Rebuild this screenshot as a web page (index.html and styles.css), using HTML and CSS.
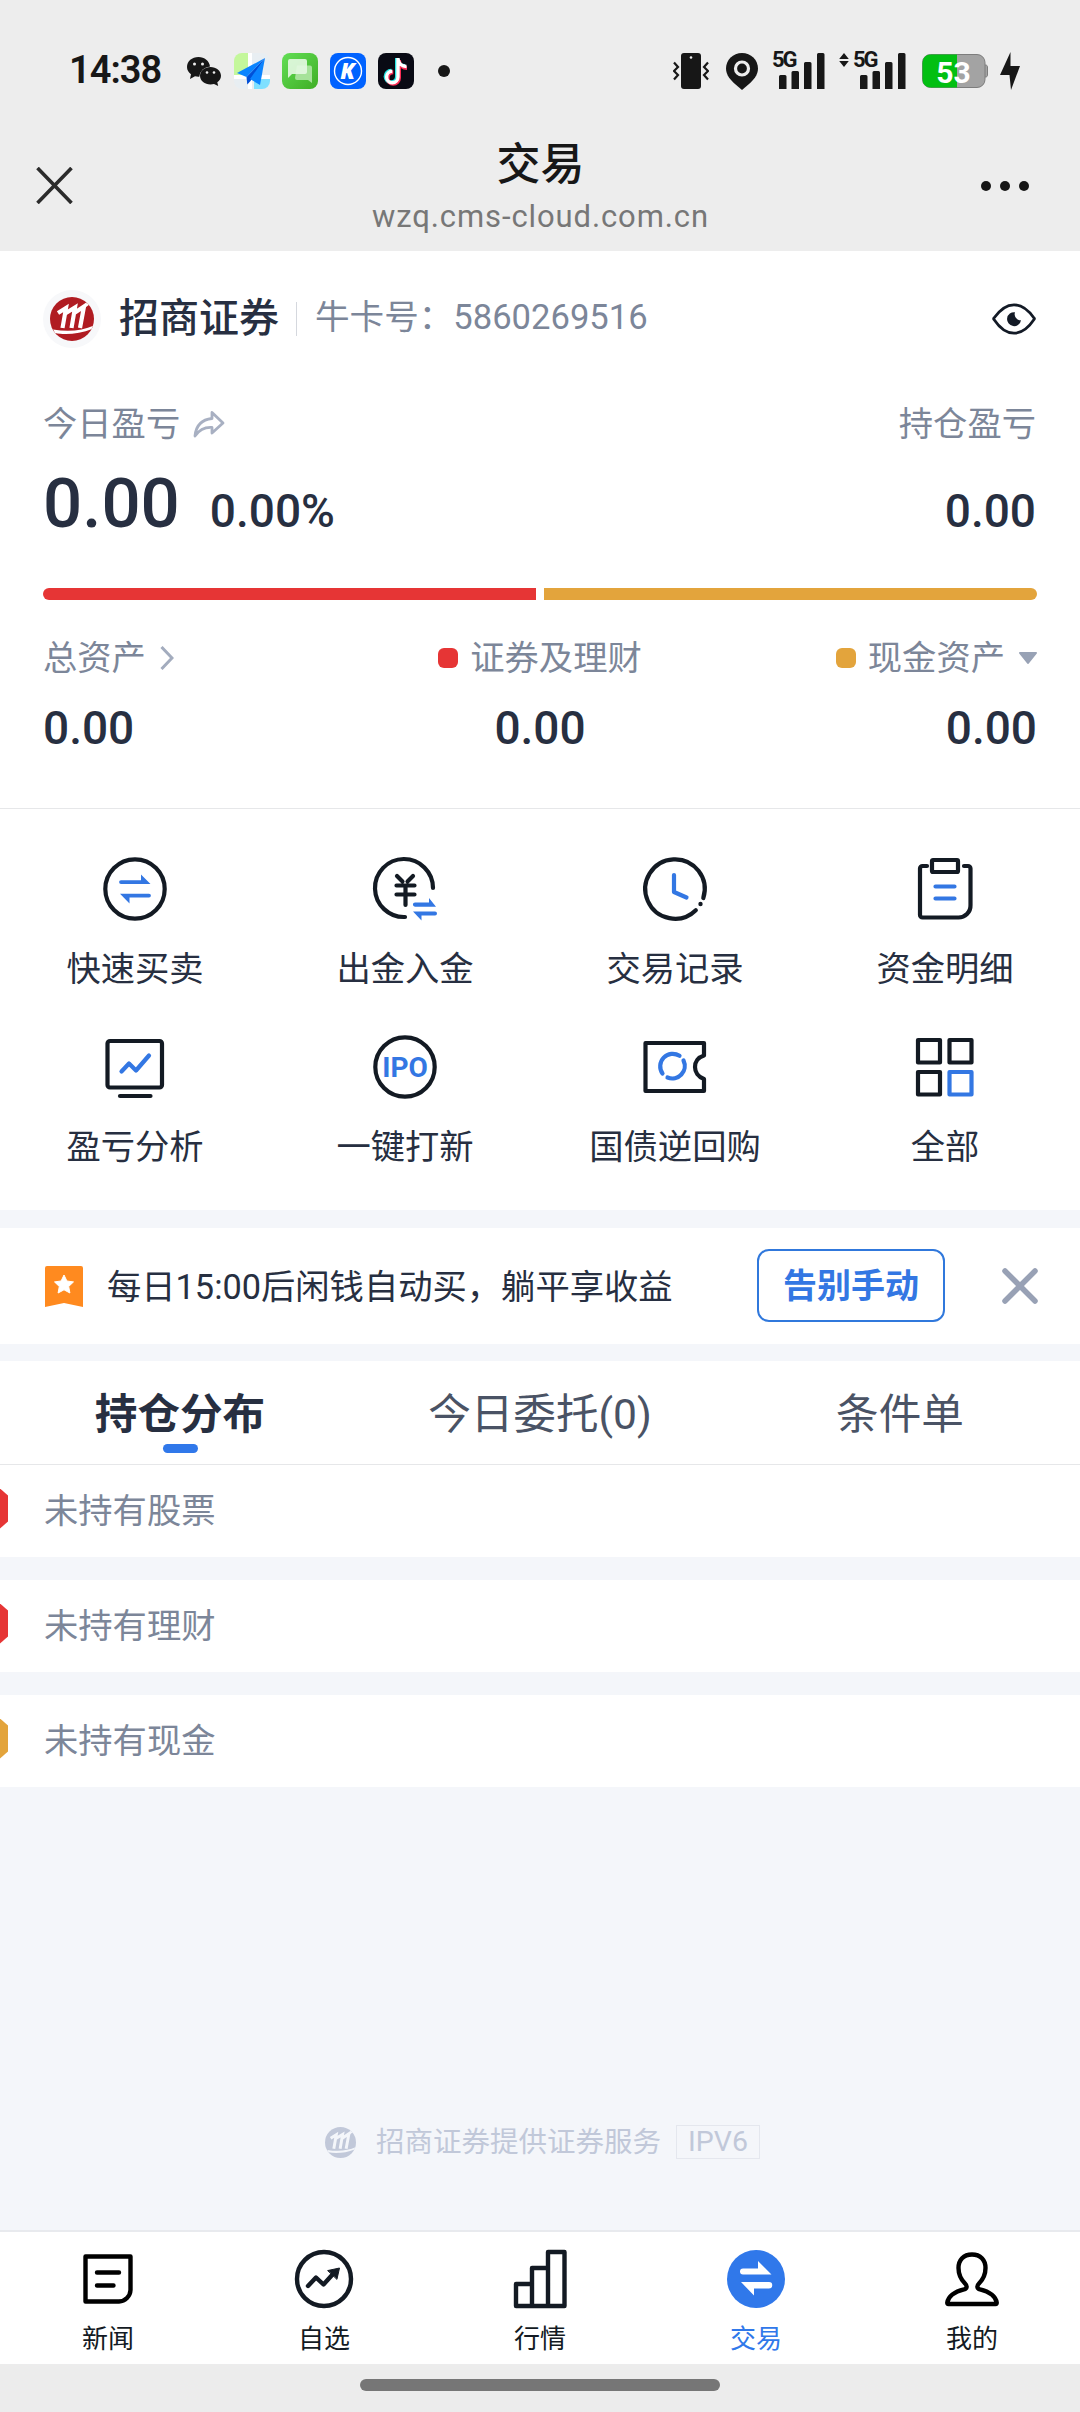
FILE: index.html
```html
<!DOCTYPE html>
<html lang="zh-CN">
<head>
<meta charset="utf-8">
<title>交易</title>
<link rel="stylesheet" href="styles.css">
</head>
<body>
<svg class="defs" width="0" height="0">
  <defs>
    <symbol id="brand" viewBox="0 0 44 44">
      <clipPath id="disc"><circle cx="22" cy="22" r="22"/></clipPath>
      <g clip-path="url(#disc)">
        <rect width="44" height="44" fill="currentColor"/>
        <path d="M8 16L16 11L12.500 31M16 16L25 10.500L21.500 31M25 15.500L34 9.500L30 31" fill="none" stroke="var(--cut)" stroke-width="4.200"/>
        <path d="M3 32.500C18 35 32 34 44 28.500L42 32C30 37 15 38 5 36Z" fill="var(--cut)"/>
        <path d="M34 10L42 4" stroke="var(--cut)" stroke-width="2.500"/>
      </g>
    </symbol>
    <symbol id="signal" viewBox="0 0 46 36">
      <path d="M1.500 22h4.500a1.500 1.500 0 0 1 1.500 1.500V36H0V23.500A1.500 1.500 0 0 1 1.500 22ZM14 18h4.500a1.500 1.500 0 0 1 1.500 1.500V36h-7.500V19.500A1.500 1.500 0 0 1 14 18ZM26.500 9H31a1.500 1.500 0 0 1 1.500 1.500V36H25V10.500A1.500 1.500 0 0 1 26.500 9ZM39.500 0H44a1.500 1.500 0 0 1 1.500 1.500V36H38V1.500A1.500 1.500 0 0 1 39.500 0Z" fill="#171717"/>
    </symbol>
  </defs>
</svg>

<header class="top">
  <div class="status">
    <span class="clock">14:38</span>
    <div class="apps">
      <svg width="36" height="36" viewBox="0 0 36 36">
        <path d="M12.500 4C6 4 1 8.300 1 14c0 3 1.500 5.500 4 7.300L4 26l5-2.700c1.100.3 2.300.5 3.500.5l.8 0A11.300 11.300 0 0 1 24 13.400C23.500 8 18.500 4 12.500 4Z" fill="#171717"/>
        <path d="M24.500 14C18.800 14 14 17.800 14 22.800s4.800 8.700 10.500 8.700c1.200 0 2.400-.2 3.500-.5l4.200 2-.9-3.700c2.200-1.600 3.700-3.900 3.700-6.500 0-5-4.800-8.800-10.500-8.800Z" fill="#171717"/>
        <g fill="#ededed"><circle cx="8.500" cy="11" r="1.500"/><circle cx="16.500" cy="11" r="1.500"/><circle cx="21" cy="19.500" r="1.300"/><circle cx="28" cy="19.500" r="1.300"/></g>
      </svg>
      <svg width="36" height="36" viewBox="0 0 36 36">
        <clipPath id="app"><rect width="36" height="36" rx="8"/></clipPath>
        <g clip-path="url(#app)">
          <rect width="36" height="36" fill="#e8eef2"/>
          <rect width="14" height="22" fill="#c4f79b"/>
          <path d="M36 26H20v10h16Z" fill="#7fe0ff"/>
          <path d="M14 0h4v36h-4ZM0 22h18v4H0ZM18 22l18 0v4H18Z" fill="#fff"/>
        </g>
        <path d="M31 5L3 20l9.500 4Z" fill="#0a84ff"/><path d="M31 5L12.500 24l.8 7.500L16.500 28Z" fill="#0050d8"/><path d="M31 5L16 26l10 6Z" fill="#0a84ff"/>
      </svg>
      <svg width="36" height="36" viewBox="0 0 36 36">
        <defs><linearGradient id="green" x2="1" y2="1"><stop stop-color="#62de55"/><stop offset="1" stop-color="#3fae25"/></linearGradient></defs>
        <rect width="36" height="36" rx="8" fill="url(#green)"/>
        <path d="M15 12.500h13a2 2 0 0 1 2 2V30l-4-3H15a2 2 0 0 1-2-2Z" fill="#a6e29a"/>
        <path d="M8 6h15a2 2 0 0 1 2 2v11a2 2 0 0 1-2 2H10l-4 4V8a2 2 0 0 1 2-2Z" fill="#e6f8e3" fill-opacity=".9"/>
      </svg>
      <svg width="36" height="36" viewBox="0 0 36 36">
        <rect width="36" height="36" rx="8" fill="#0062ff"/><circle cx="18" cy="18" r="13.500" fill="none" stroke="#fff" stroke-width="1.400"/>
        <text x="17.500" y="26" class="app-k" text-anchor="middle">K</text>
      </svg>
      <svg width="36" height="36" viewBox="0 0 36 36">
        <rect width="36" height="36" rx="8" fill="#090a14"/>
        <g fill="none" stroke-width="4">
          <path d="M19 5v18.500a5.700 5.700 0 1 1-5.700-5.700M19 6c.5 4.500 4 7 8 7" stroke="#27e5e4"/>
          <path d="M21 7v18a5.700 5.700 0 1 1-5.700-5.700M21 8c.5 4.500 4 7 8 7" stroke="#fb2c55"/>
          <path d="M20 5v19a5.700 5.700 0 1 1-5.700-5.700M20 6c.5 4.500 4 7.500 8.500 7.500" stroke="#fff" stroke-width="3.400"/>
        </g>
      </svg>
      <i class="more-dot"></i>
    </div>
    <div class="system">
      <svg class="vibrate" width="36" height="36" viewBox="0 0 36 36">
        <rect x="8" width="20" height="36" rx="3" fill="#171717"/><circle cx="18" cy="4.500" r="1.300" fill="#ededed"/>
        <path d="M1 9.500l4 4.500-4 4 4 4-4 4.500M35 9.500L31 14l4 4-4 4 4 4.500" fill="none" stroke="#171717" stroke-width="2.200"/>
      </svg>
      <svg class="pin" width="32" height="37" viewBox="0 0 32 37">
        <path d="M16 0C7 0 0 7 0 15.500 0 22 4.500 27 9 31l7 6 7-6c4.500-4 9-9 9-15.500C32 7 25 0 16 0Z" fill="#171717"/><circle cx="16" cy="15.500" r="6.500" fill="none" stroke="#ededed" stroke-width="3.200"/>
      </svg>
      <div class="net net-a"><span>5G</span><svg width="46" height="36"><use href="#signal"/></svg></div>
      <svg class="updown" width="10" height="14" viewBox="0 0 10 14"><path d="M5 0l4.800 6H.2ZM5 14L.2 8h9.600Z" fill="#171717"/></svg>
      <div class="net"><span>5G</span><svg width="46" height="36"><use href="#signal"/></svg></div>
      <svg class="battery" width="66" height="34" viewBox="0 0 66 34">
        <path d="M62 11h1.500c1.500 0 2 1 2 2v8c0 1-.5 2-2 2H62Z" fill="#a3a3a3" stroke="#7d7d7d"/>
        <rect x=".5" y=".5" width="62.500" height="33" rx="8" fill="#a3a3a3" stroke="#7d7d7d"/>
        <path d="M35 .5H8.500a8 8 0 0 0-8 8v17a8 8 0 0 0 8 8H35Z" fill="#02bf12"/>
        <text x="31.500" y="28.500" text-anchor="middle" class="battery-text">53</text>
      </svg>
      <svg class="bolt" width="20" height="38" viewBox="0 0 20 38"><path d="M10.500 0L0 23h9.500L11 38 20 14h-9.500Z" fill="#171717"/></svg>
    </div>
  </div>
  <div class="nav">
    <svg width="37" height="37" viewBox="0 0 37 37"><path d="M1.500 1L35.500 36M35.500 1L1.500 36" stroke="#2b2b2b" stroke-width="3.600"/></svg>
    <div class="nav-title"><h1>交易</h1><p>wzq.cms-cloud.com.cn</p></div>
    <svg width="48" height="10" viewBox="0 0 48 10" fill="#171717"><circle cx="5" cy="5" r="5"/><circle cx="24" cy="5" r="5"/><circle cx="43" cy="5" r="5"/></svg>
  </div>
</header>

<section class="account">
  <div class="row broker">
    <span class="avatar"><svg width="44" height="44"><use href="#brand"/></svg></span>
    <b>招商证券</b><i class="vline"></i><span class="card-no">牛卡号：5860269516</span>
    <svg class="eye" width="44" height="32" viewBox="0 0 44 32">
      <path d="M2 16.500C1.500 16 1.500 15.500 2 15 8 6.500 14 1.800 22 1.800S36 6.500 42 15c.5.500.5 1 0 1.500C36 25.500 30 30.200 22 30.200S8 25.500 2 16.500Z" fill="none" stroke="#131a26" stroke-width="2.800"/>
      <path d="M23 9.200A7 7 0 1 0 29 17.200 6 6 0 0 1 23 9.200Z" fill="#131a26"/>
    </svg>
  </div>
  <div class="row labels">
    <span>今日盈亏</span>
    <svg class="share" width="32" height="28" viewBox="0 0 32 28"><path d="M19 2.500L30 13 19 23V17.500C12 17 6.500 19.500 2 26 3 16 8.500 9.500 19 8.500Z" fill="none" stroke="#a8b0c2" stroke-width="2.800" stroke-linejoin="round"/></svg>
    <span class="end">持仓盈亏</span>
  </div>
  <div class="row profit"><b class="big">0.00</b><b>0.00%</b><b class="end">0.00</b></div>
  <div class="ratio"><i class="stock"></i><i class="cash"></i></div>
  <div class="assets">
    <div><p>总资产<svg class="chev" width="14" height="24" viewBox="0 0 14 24"><path d="M1.500 1L12 12 1.500 23" fill="none" stroke="#a3acbe" stroke-width="3"/></svg></p><b>0.00</b></div>
    <div><p><i class="key stock"></i>证券及理财</p><b>0.00</b></div>
    <div><p><i class="key cash"></i>现金资产<svg class="tri" width="18" height="12" viewBox="0 0 18 12"><path d="M1 0h16a1 1 0 0 1 .8 1.500L9.800 11.500a1 1 0 0 1-1.600 0L.2 1.500A1 1 0 0 1 1 0Z" fill="#98a2b5"/></svg></p><b>0.00</b></div>
  </div>
</section>

<section class="grid">
  <a><svg viewBox="0 0 64 64"><circle cx="32" cy="32" r="29.700"/><g class="blue-fill"><path d="M18 23.200h20V17.500L47.500 27H18a1.900 1.900 0 0 1 0-3.800ZM46 40.500H26.500V46.500L17 36.700H46a1.900 1.900 0 0 1 0 3.800Z"/></g></svg>快速买卖</a>
  <a><svg viewBox="0 0 64 64"><path d="M60 31A29 29 0 1 0 32 60"/><path d="M24 19l5.500 5.500M40 19l-5.500 5.500M23.500 28.500h18M23.500 37.500h18M32.500 28.500V48"/><g class="blue-fill"><path d="M42 45.500h14V41L63 49.700H42a2.100 2.100 0 0 1 0-4.200ZM62 58.500H48.500V63.500L40 54.500H62a2 2 0 0 1 0 4Z"/></g></svg>出金入金</a>
  <a><svg viewBox="0 0 64 64"><path d="M60.300 41A29.700 29.700 0 1 0 52.800 53.200"/><circle cx="57.500" cy="47" r="2.200" fill="#131a23" stroke="none"/><path class="blue" d="M31 18v17l12.500 5.500"/></svg>交易记录</a>
  <a><svg viewBox="0 0 64 64"><path d="M14 9H9.500A2.500 2.500 0 0 0 7 11.500V58a2.500 2.500 0 0 0 2.500 2.500H45A12 12 0 0 0 57.500 48V11.500A2.500 2.500 0 0 0 55 9H51"/><rect x="19" y="3" width="26" height="12" rx="1"/><path class="blue" d="M22.500 29.500H41.500M22.500 41.500H41.500"/></svg>资金明细</a>
  <a><svg viewBox="0 0 64 64"><rect x="4.500" y="6" width="54.500" height="46.500" rx="2.500"/><path d="M17 61H47.500"/><path class="blue" d="M18.500 36.500L26 28.500L33 35.500L46 20.500"/></svg>盈亏分析</a>
  <a><svg viewBox="0 0 64 64"><circle cx="32" cy="32" r="29.700"/><text x="32" y="42" text-anchor="middle" class="ipo">IPO</text></svg>一键打新</a>
  <a><svg viewBox="0 0 64 64"><path d="M2.500 8H61V20.500C49 24 49 40 61 44V56H2.500Z"/><path class="blue" d="M36.500 20.800A12.500 12.500 0 0 0 19.500 38.500M24.500 42.500A12.500 12.500 0 0 0 40.500 25.500"/></svg>国债逆回购</a>
  <a><svg viewBox="0 0 64 64"><rect x="5" y="5" width="22" height="22.500"/><rect x="36.500" y="5" width="22" height="22.500"/><rect x="5" y="37" width="22" height="22.500"/><rect class="blue" x="36.500" y="37" width="22" height="22.500"/></svg>全部</a>
</section>

<section class="promo">
  <svg width="38" height="41" viewBox="0 0 38 41"><path d="M2 0H36a2 2 0 0 1 2 2V41L19 37 0 41V2A2 2 0 0 1 2 0Z" fill="#ff8a1f"/><path d="M19 9l2.900 6 6.600.9-4.800 4.600 1.200 6.500L19 23.800 13.100 27l1.200-6.500-4.800-4.600 6.600-.9Z" fill="#fff" stroke="#fff" stroke-linejoin="round"/></svg>
  <p>每日15:00后闲钱自动买，躺平享收益</p>
  <button>告别手动</button>
  <svg class="dismiss" width="36" height="36" viewBox="0 0 36 36"><path d="M3 3L33 33M33 3L3 33" stroke="#98a1b5" stroke-width="5.500" stroke-linecap="round"/></svg>
</section>

<nav class="tabs"><a class="active">持仓分布</a><a>今日委托(0)</a><a>条件单</a></nav>
<ul class="holdings">
  <li><i class="stock"></i>未持有股票</li>
  <li><i class="stock"></i>未持有理财</li>
  <li><i class="cash"></i>未持有现金</li>
</ul>

<footer class="service"><svg width="31" height="31"><use href="#brand"/></svg><span>招商证券提供证券服务</span><em>IPV6</em></footer>

<nav class="tabbar">
  <a><svg viewBox="0 0 60 60"><path d="M7.500 7.500H52.500V41A12 12 0 0 1 41 52.500H7.500Z" stroke="#000"/><path d="M19 23.500H41M19 36.500H35.500" stroke="#000"/></svg>新闻</a>
  <a><svg viewBox="0 0 60 60"><circle cx="30" cy="30" r="27"/><path d="M14 37L22 28.500L29.500 35.500L39 25"/><path d="M34 21.500L45.500 19 43 30Z" fill="#131a23" stroke-width="1"/></svg>自选</a>
  <a><svg viewBox="0 0 60 60"><path d="M6 35H22V57H6ZM22 19H38V57H22ZM38 3H54.500V57H38Z"/></svg>行情</a>
  <a class="active"><svg viewBox="0 0 60 60"><circle cx="30" cy="30" r="29" fill="#3078ea" stroke="none"/><path d="M17 19.500H32V12L45.500 25.500H17A3 3 0 0 1 17 19.500ZM43 39.500H28V46.500L15 33H43A3.200 3.200 0 0 1 43 39.500Z" fill="#fff" stroke="none"/></svg>交易</a>
  <a><svg viewBox="0 0 60 60"><path d="M30 5.500C21.500 5.500 16.500 11 16.500 19C16.500 26 19 30.500 23 34.500C25.500 37 25 39.500 22 40.300C12 42.500 6 48 5.300 53.500C5.200 54.500 5.500 55 6.500 55H53.500C54.500 55 54.800 54.500 54.700 53.500C54 48 48 42.500 38 40.300C35 39.500 34.500 37 37 34.500C41 30.500 43.500 26 43.500 19C43.500 11 38.500 5.500 30 5.500Z" stroke="#000"/></svg>我的</a>
</nav>
<div class="home"><i></i></div>
</body>
</html>
```
FILE: styles.css
```css
* { box-sizing: border-box; margin: 0; padding: 0; }
body {
  width: 1080px;
  height: 2412px;
  display: flex;
  flex-direction: column;
  overflow: hidden;
  background: #f4f6fa;
  color: #272f41;
  font: 34.3px/50px Roboto, "Noto Sans CJK SC", sans-serif;
}
.defs { position: absolute; }
svg { display: block; flex: none; }
i, em { font-style: normal; }
ul { list-style: none; }
b { font-weight: 500; }
.stock { background: #e63535; }
.cash { background: #e3a43c; }
.end { margin-left: auto; }

.top { height: 251px; background: #ededed; color: #171717; flex: none; }
.status { height: 142px; display: flex; align-items: center; padding: 0 60px 0 69px; }
.clock { width: 117px; margin-top: -2px; font-size: 38px; font-weight: 600; letter-spacing: -1px; }
.apps { display: flex; gap: 12px; align-items: center; }
.app-k { font: italic 800 22px "Open Sans", sans-serif; fill: #fff; }
.more-dot { width: 12px; height: 12px; margin-left: 12px; border-radius: 50%; background: #171717; }
.system { display: flex; align-items: center; margin-left: auto; height: 38px; }
.pin { margin-left: 17px; }
.net { position: relative; padding-left: 6px; }
.net-a { margin: 0 14px 0 15px; }
.net span { position: absolute; left: -1px; top: -2px; font: 700 22px/18px Roboto, sans-serif; letter-spacing: -2px; }
.updown { align-self: flex-start; margin: 1px 5px 0 0; }
.battery { margin-left: 16px; }
.battery-text { font: 700 30px Roboto, sans-serif; fill: #fff; }
.bolt { margin-left: 12px; }
.nav { display: flex; justify-content: space-between; align-items: center; padding: 0 51px 0 36px; height: 87px; }
.nav-title { text-align: center; margin-left: 27px; padding-top: 7px; }
.nav h1 { font-size: 44px; line-height: 55px; font-weight: 500; }
.nav p { font-size: 31px; line-height: 48px; color: #777; letter-spacing: 0.9px; }

.account { height: 558px; background: #fff; border-bottom: 1px solid #e6e7e9; padding: 0 43px; flex: none; }
.row { display: flex; align-items: center; padding-right: 1px; }
.broker { padding-top: 39px; }
.avatar { width: 58px; height: 58px; padding: 7px; border-radius: 50%; background: #f7f8fa; color: #b01c22; --cut: #fff; }
.broker b { font-size: 40px; margin-left: 18px; }
.vline { width: 1px; height: 34px; margin: 0 18px 0 17px; background: #d5d8de; }
.card-no { color: #7c8699; font-size: 34.6px; margin-top: -4px; }
.eye { margin-left: auto; }
.labels { padding-top: 51px; color: #7c8699; }
.share { margin-left: 13px; }
.profit { align-items: baseline; height: 139px; padding-top: 15px; font-size: 46px; }
.profit .big { font-size: 69px; line-height: 80px; margin-right: 30px; }
.ratio { display: flex; gap: 8px; height: 12px; border-radius: 6px; overflow: hidden; }
.ratio i { flex: 1; }
.assets { display: grid; grid-template-columns: 1fr 1fr 1fr; padding-top: 33px; }
.assets div { display: flex; flex-direction: column; align-items: center; gap: 20px; }
.assets div:first-child { align-items: flex-start; }
.assets div:last-child { align-items: flex-end; }
.assets p { display: flex; align-items: center; color: #7c8699; }
.assets b { font-size: 46px; }
.key { width: 20px; height: 20px; border-radius: 6px; margin-right: 12px; }
.chev, .tri { margin-left: 14px; }

.grid { height: 401px; background: #fff; display: grid; grid-template-columns: repeat(4, 270px); grid-auto-rows: 178px; padding-top: 48px; flex: none; }
.grid a { display: flex; flex-direction: column; align-items: center; gap: 23px; }
.grid svg { width: 64px; height: 64px; fill: none; stroke: #131a23; stroke-width: 4.2; stroke-linecap: round; stroke-linejoin: round; overflow: visible; }
.grid .blue { stroke: #3377e3; }
.grid .blue-fill { fill: #3377e3; stroke: none; }
.ipo { font: 700 28px Roboto, sans-serif; fill: #3377e3; stroke: none; }

.promo { height: 116px; margin-top: 18px; padding: 0 42px 0 45px; background: #fff; display: flex; align-items: center; flex: none; }
.promo p { margin-left: 24px; margin-top: 2px; white-space: nowrap; }
.promo button { margin: -1px 0 0 auto; width: 188px; height: 73px; border: 2px solid #3078dc; border-radius: 12px; background: #fff; color: #3377e3; font: 700 34px/60px Roboto, "Noto Sans CJK SC", sans-serif; }
.dismiss { margin: -1px 0 0 57px; }

.tabs { height: 104px; margin-top: 17px; background: #fff; border-bottom: 1px solid #e6e7e9; display: grid; grid-template-columns: repeat(3, 1fr); text-align: center; font-size: 42.6px; line-height: 106px; color: #4a5365; flex: none; }
.tabs .active { font-weight: 700; color: #272f41; position: relative; }
.tabs .active::after { content: ""; position: absolute; left: 163px; top: 83px; width: 35px; height: 9px; border-radius: 5px; background: #3078ea; }
.holdings { display: grid; gap: 23px; flex: none; }
.holdings li { height: 92px; padding-bottom: 1px; background: #fff; display: flex; align-items: center; gap: 36px; color: #7c8699; }
.holdings i { width: 8px; height: 40px; margin-bottom: 4px; clip-path: polygon(0 0, 100% 7px, 100% 33px, 0 100%); }

.service { display: flex; align-items: center; justify-content: center; margin-top: auto; margin-bottom: 71px; height: 34px; color: #c1c8d9; --cut: #f4f6fa; font-size: 28.5px; line-height: 34px; padding-left: 5px; }
.service span { margin: 2px 15px 0 20px; }
.service em { width: 84px; height: 34px; border: 1px solid #e4e7ee; text-align: center; line-height: 31px; }

.tabbar { height: 134px; background: #fff; border-top: 2px solid #e8eaee; display: grid; grid-template-columns: repeat(5, 1fr); font-size: 26px; line-height: 38px; color: #131a23; flex: none; }
.tabbar a { display: flex; flex-direction: column; align-items: center; padding-top: 17px; gap: 11px; }
.tabbar svg { width: 60px; height: 60px; fill: none; stroke: #131a23; stroke-width: 4.4; stroke-linecap: round; stroke-linejoin: round; }
.tabbar .active { color: #3078ea; }
.home { height: 48px; background: #ececec; padding-top: 15px; flex: none; }
.home i { display: block; width: 360px; height: 12px; margin: 0 auto; border-radius: 6px; background: #767676; }
```
